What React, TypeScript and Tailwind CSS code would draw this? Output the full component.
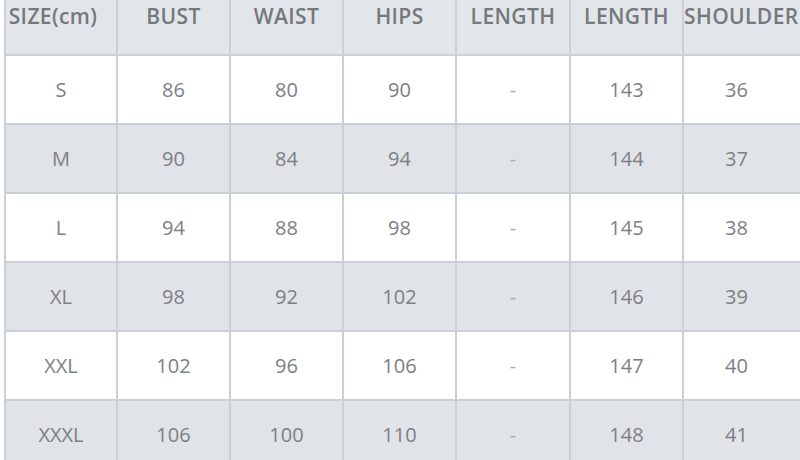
import React from "react";

const heads = ["SIZE(cm)", "BUST", "WAIST", "HIPS", "LENGTH", "LENGTH", "SHOULDER"];
const rows = [
  ["S", "86", "80", "90", "-", "143", "36"],
  ["M", "90", "84", "94", "-", "144", "37"],
  ["L", "94", "88", "98", "-", "145", "38"],
  ["XL", "98", "92", "102", "-", "146", "39"],
  ["XXL", "102", "96", "106", "-", "147", "40"],
  ["XXXL", "106", "100", "110", "-", "148", "41"],
];

export default function App() {
  return (
    <div
      className="w-[800px] h-[460px] overflow-hidden bg-white"
      style={{ fontFamily: '"Open Sans", "Noto Sans", sans-serif' }}
    >
      <div className="ml-[4px] w-[830px] grid grid-cols-[112px_113px_113px_113px_114px_113px_152px]">
        {heads.map((h, i) => (
          <div
            key={h + i}
            className={
              "h-[56px] pt-[4px] bg-[#e2e5e9] border-l-2 border-b-2 border-[#cbd0d7] flex text-[21px] leading-[24px] font-semibold text-[#75787d] tracking-[0.4px] whitespace-nowrap " +
              (i === 6 ? "justify-start pl-[0px]" : i === 0 ? "justify-center pr-[16px]" : "justify-center")
            }
          >
            {h}
          </div>
        ))}
        {rows.map((r, ri) =>
          r.map((c, ci) => (
            <div
              key={ri + "-" + ci}
              className={
                "h-[69px] border-l-2 border-b-2 border-[#cbd0d7] flex items-center text-[20px] " +
                (ri % 2 === 0 ? "bg-white " : "bg-[#e0e3e8] ") +
                (c === "-" ? "text-[#a8abb0]" : "text-[#7d8085]") +
                (ci === 6 ? " justify-start pl-[41px]" : " justify-center")
              }
            >
              {c}
            </div>
          ))
        )}
      </div>
    </div>
  );
}
